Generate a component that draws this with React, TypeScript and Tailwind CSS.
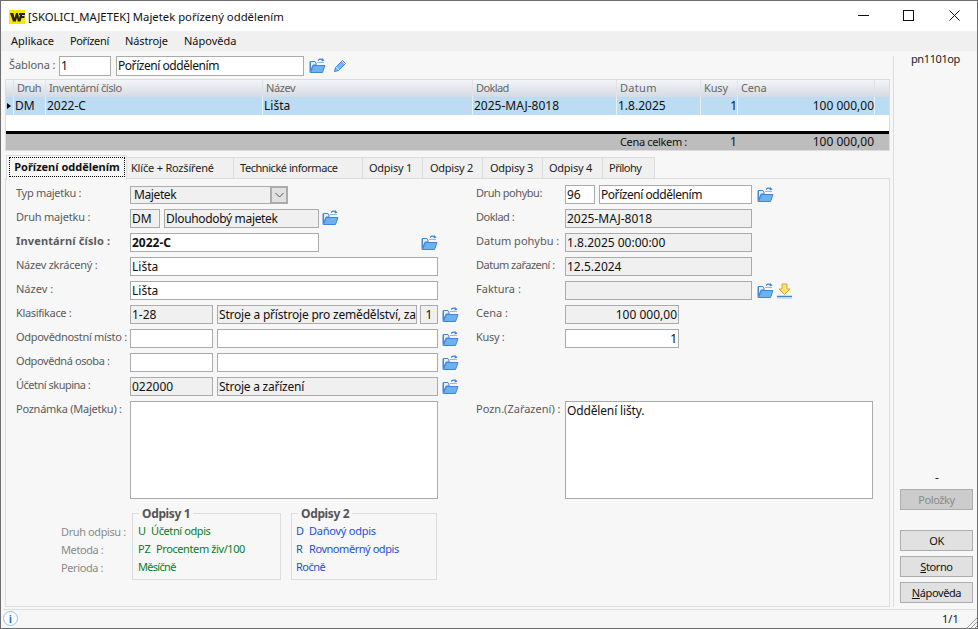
import React from "react";

const font = { fontFamily: "'Noto Sans', 'Liberation Sans', sans-serif" };

function Folder({ className }: { className: string }) {
  return (
    <svg className={className} width="17" height="17" viewBox="0 0 17 17" fill="none">
      <path d="M1.5 4.5H6L7 6V8H4L1.5 14Z" fill="#e3effb" stroke="#3f86d6" strokeWidth="1" />
      <path d="M4.5 8.5H16L13.5 15.5H1.5Z" fill="#6fb0ee" stroke="#3f86d6" strokeWidth="1" />
      <path d="M1 4.5V15.5" stroke="#3f86d6" strokeWidth="1" />
      <path d="M9 3.5C10.5 2 12.5 2 14 3" stroke="#3f86d6" strokeWidth="1.2" />
      <path d="M13 1L15.6 3.4L12.6 4.4Z" fill="#3f86d6" />
      <path d="M8 5.5H15" stroke="#8fbdeb" strokeWidth="1" />
    </svg>
  );
}

function Pencil({ className }: { className: string }) {
  return (
    <svg className={className} width="14" height="14" viewBox="0 0 14 14" fill="none">
      <path d="M1.5 12.5L2.5 8.5L9.5 1.5L12.5 4.5L5.5 11.5Z" fill="#7fb4ec" stroke="#3f86d6" strokeWidth="1" />
      <path d="M3 8L6 11M9 2L12 5" stroke="#e4f0fb" strokeWidth="1" />
    </svg>
  );
}

function Download({ className }: { className: string }) {
  return (
    <svg className={className} width="17" height="16" viewBox="0 0 17 16" fill="none">
      <path d="M6 1H11V6H14L8.5 11.5L3 6H6Z" fill="#fbe08a" stroke="#dfa520" strokeWidth="1" />
      <path d="M1 13.5H16" stroke="#3f86d6" strokeWidth="1.5" />
      <path d="M1 15H16" stroke="#a8ccf0" strokeWidth="1" />
    </svg>
  );
}

function Lbl({ className, children }: { className: string; children: React.ReactNode }) {
  return <div className={`absolute text-[11px] leading-[16px] text-[#5b5b5b] whitespace-nowrap ${className}`}>{children}</div>;
}

function Inp({ className, children, ro, right, bold }: { className: string; children?: React.ReactNode; ro?: boolean; right?: boolean; bold?: boolean }) {
  return (
    <div className={`absolute border border-[#ababab] text-[12px] leading-[16px] text-[#111] px-[1px] pt-[1px] whitespace-nowrap overflow-hidden ${ro ? "bg-[#f0f0f0]" : "bg-white"} ${right ? "text-right" : ""} ${bold ? "font-bold" : ""} ${className}`}>
      {children}
    </div>
  );
}

function Cell({ className, children }: { className: string; children: React.ReactNode }) {
  return <div className={`absolute whitespace-nowrap text-[12px] leading-[16px] ${className}`}>{children}</div>;
}

function HCell({ className, children }: { className: string; children: React.ReactNode }) {
  return <div className={`absolute whitespace-nowrap text-[11px] leading-[16px] top-0 ${className}`}>{children}</div>;
}

function Sep({ className }: { className: string }) {
  return <div className={`absolute top-0 bottom-0 w-[1px] bg-[#dfe3e8] ${className}`} />;
}

function Tab({ className, children }: { className: string; children: React.ReactNode }) {
  return (
    <div className={`absolute top-[156px] h-[22px] bg-[#f0f0f0] border border-[#dcdcdc] border-l-0 text-[11px] leading-[20px] text-[#222] whitespace-nowrap ${className}`}>
      {children}
    </div>
  );
}

function Btn({ className, children, disabled }: { className: string; children: React.ReactNode; disabled?: boolean }) {
  return (
    <div className={`absolute left-[899px] w-[73px] h-[21px] border border-[#adadad] text-center text-[11px] tracking-[-0.4px] leading-[19px] ${disabled ? "bg-[#cccccc] text-[#8a8a8a]" : "bg-[#e1e1e1] text-[#111]"} ${className}`}>
      {children}
    </div>
  );
}

export default function App() {
  return (
    <div className="relative w-[978px] h-[629px] overflow-hidden bg-[#f7f7f7] border border-[#6e6e6e]" style={font}>
      <div className="absolute left-0 top-0 w-[977px] h-[30px] bg-white" />
      <div className="absolute left-[8px] top-[9px] w-[16px] h-[14px] bg-[#ffe600] flex items-center justify-center">
        <svg width="15" height="10" viewBox="0 0 15 10">
          <path d="M0 1H3.4L4.4 6L6 1H8L9 6L10 3H9V1H15V3H12V4H14.5V6H11.5L10.5 9.5H7.8L7 5.5L5.8 9.5H3Z" fill="#222" />
        </svg>
      </div>
      <div className="absolute left-[27px] top-[7px] text-[11.3px] leading-[17px] text-[#111] whitespace-nowrap">[SKOLICI_MAJETEK] Majetek pořízený oddělením</div>
      <div className="absolute left-[857px] top-[14px] w-[11px] h-[1px] bg-[#111]" />
      <div className="absolute left-[902px] top-[9px] w-[11px] h-[11px] border border-[#111]" />
      <svg className="absolute left-[948px] top-[9px]" width="11" height="11" viewBox="0 0 11 11" stroke="#111"><path d="M0.5 0.5L10.5 10.5M10.5 0.5L0.5 10.5" /></svg>

      <div className="absolute left-0 top-[30px] w-[977px] h-[20px] bg-[#f0f0f0] flex text-[11px] leading-[20px] text-[#111]">
        <span className="ml-[10px]">Aplikace</span>
        <span className="ml-[16px] tracking-[-0.35px]">Pořízení</span>
        <span className="ml-[16px] tracking-[-0.1px]">Nástroje</span>
        <span className="ml-[16px]">Nápověda</span>
      </div>

      <Lbl className="left-[8px] top-[56px] tracking-[-0.1px]">Šablona :</Lbl>
      <Inp className="left-[58px] top-[55px] w-[52px] h-[20px]">1</Inp>
      <Inp className="left-[115px] top-[55px] w-[188px] h-[20px] tracking-[-0.45px]">Pořízení oddělením</Inp>
      <Folder className="absolute left-[308px] top-[56px]" />
      <Pencil className="absolute left-[332px] top-[58px]" />

      <div className="absolute left-[892px] top-[55px] w-[1px] h-[551px] bg-[#dcdcdc]" />
      <div className="absolute left-[910px] top-[50px] text-[11px] tracking-[-0.4px] leading-[16px] text-[#222]">pn1101op</div>

      {/* grid */}
      <div className="absolute left-[4px] top-[78px] w-[885px] h-[72px] bg-white border border-[#dcdcdc]">
        <div className="absolute left-0 top-0 w-full h-[17px] bg-gradient-to-b from-[#f3f5f8] to-[#d5dbe3] text-[#666]">
          <Sep className="left-[7px]" /><Sep className="left-[39px]" /><Sep className="left-[256px]" /><Sep className="left-[466px]" /><Sep className="left-[610px]" /><Sep className="left-[694px]" /><Sep className="left-[731px]" /><Sep className="left-[868px]" />
          <HCell className="left-[11px] tracking-[-0.5px]">Druh</HCell>
          <HCell className="left-[43px] tracking-[-0.4px]">Inventární číslo</HCell>
          <HCell className="left-[260px] tracking-[-0.4px]">Název</HCell>
          <HCell className="left-[470px] tracking-[-0.6px]">Doklad</HCell>
          <HCell className="left-[614px] tracking-[0.3px]">Datum</HCell>
          <HCell className="left-[698px] tracking-[-0.15px]">Kusy</HCell>
          <HCell className="left-[735px] tracking-[-0.15px]">Cena</HCell>
        </div>
        <div className="absolute left-0 top-[17px] w-full h-[18px] bg-[#bbdcf3] text-[#111]">
          <Sep className="left-[7px] bg-[#e4f0fa]" /><Sep className="left-[39px] bg-[#e4f0fa]" /><Sep className="left-[256px] bg-[#e4f0fa]" /><Sep className="left-[466px] bg-[#e4f0fa]" /><Sep className="left-[610px] bg-[#e4f0fa]" /><Sep className="left-[694px] bg-[#e4f0fa]" /><Sep className="left-[731px] bg-[#e4f0fa]" /><Sep className="left-[868px] bg-[#e4f0fa]" />
          <div className="absolute left-[1px] top-[6px] w-0 h-0 border-y-[3px] border-y-transparent border-l-[4px] border-l-black" />
          <Cell className="left-[9px] top-[1px]">DM</Cell>
          <Cell className="left-[41px] top-[1px]">2022-C</Cell>
          <Cell className="left-[258px] top-[1px]">Lišta</Cell>
          <Cell className="left-[468px] top-[1px]">2025-MAJ-8018</Cell>
          <Cell className="left-[612px] top-[1px]">1.8.2025</Cell>
          <Cell className="right-[152px] top-[1px]">1</Cell>
          <Cell className="right-[15px] top-[1px]">100 000,00</Cell>
        </div>
        <div className="absolute left-0 top-[51px] w-full h-[3px] bg-black" />
        <div className="absolute left-0 top-[54px] w-full h-[16px] bg-[#bdbdbd] text-[#111]">
          <HCell className="left-[614px] tracking-[-0.35px]">Cena celkem :</HCell>
          <Cell className="left-[724px] top-0">1</Cell>
          <Cell className="right-[15px] top-0">100 000,00</Cell>
        </div>
      </div>

      {/* tabs */}
      <div className="absolute left-[4px] top-[177px] w-[885px] h-[429px] border border-[#dcdcdc] bg-[#f7f7f7]" />
      <Tab className="left-[126px] w-[107px] pl-[4px] tracking-[-0.2px]">Klíče + Rozšířené</Tab>
      <Tab className="left-[233px] w-[129px] pl-[6px] tracking-[-0.45px]">Technické informace</Tab>
      <Tab className="left-[362px] w-[60px] pl-[6px] tracking-[-0.25px]">Odpisy 1</Tab>
      <Tab className="left-[422px] w-[60px] pl-[7px] tracking-[-0.25px]">Odpisy 2</Tab>
      <Tab className="left-[482px] w-[60px] pl-[7px] tracking-[-0.25px]">Odpisy 3</Tab>
      <Tab className="left-[542px] w-[60px] pl-[6px] tracking-[-0.25px]">Odpisy 4</Tab>
      <Tab className="left-[602px] w-[52px] pl-[6px] tracking-[-0.5px]">Přílohy</Tab>
      <div className="absolute left-[5px] top-[154px] w-[121px] h-[25px] bg-[#f7f7f7] border border-[#dcdcdc] border-b-0">
        <div className="absolute left-[2px] top-[1px] w-[116px] h-[20px] border border-dotted border-black text-center font-bold text-[11px] leading-[17px] text-[#111] whitespace-nowrap">Pořízení oddělením</div>
      </div>

      {/* left form */}
      <Lbl className="left-[15px] top-[184px] tracking-[-0.3px]">Typ majetku :</Lbl>
      <div className="absolute left-[129px] top-[185px] w-[158px] h-[18px] border border-[#ababab] bg-[#f0f0f0] text-[12px] leading-[16px] tracking-[-0.4px] text-[#111] pl-[3px]">
        Majetek
        <div className="absolute -right-[1px] -top-[1px] w-[18px] h-[18px] bg-[#e1e1e1] border-2 border-[#ababab] flex items-center justify-center">
          <svg width="9" height="6" viewBox="0 0 9 6" fill="none" stroke="#555"><path d="M0.5 1L4.5 5L8.5 1" /></svg>
        </div>
      </div>
      <Lbl className="left-[15px] top-[208px] tracking-[-0.2px]">Druh majetku :</Lbl>
      <Inp ro className="left-[129px] top-[208px] w-[30px] h-[19px]">DM</Inp>
      <Inp ro className="left-[163px] top-[208px] w-[155px] h-[19px] tracking-[-0.33px]">Dlouhodobý majetek</Inp>
      <Folder className="absolute left-[321px] top-[208px]" />
      <Lbl className="left-[15px] top-[232px] font-bold tracking-[0.15px]">Inventární číslo :</Lbl>
      <Inp bold className="left-[129px] top-[232px] w-[189px] h-[19px]">2022-C</Inp>
      <Folder className="absolute left-[420px] top-[233px]" />
      <Lbl className="left-[15px] top-[256px] tracking-[-0.25px]">Název zkrácený :</Lbl>
      <Inp className="left-[129px] top-[256px] w-[308px] h-[19px]">Lišta</Inp>
      <Lbl className="left-[15px] top-[280px]">Název :</Lbl>
      <Inp className="left-[129px] top-[280px] w-[308px] h-[19px]">Lišta</Inp>
      <Lbl className="left-[15px] top-[304px] tracking-[-0.35px]">Klasifikace :</Lbl>
      <Inp ro className="left-[129px] top-[304px] w-[83px] h-[19px]">1-28</Inp>
      <Inp ro className="left-[216px] top-[304px] w-[200px] h-[19px] tracking-[-0.2px]">Stroje a přístroje pro zemědělství, za</Inp>
      <Inp ro className="left-[419px] top-[304px] w-[18px] h-[19px] text-center">1</Inp>
      <Folder className="absolute left-[441px] top-[305px]" />
      <Lbl className="left-[15px] top-[328px] tracking-[-0.3px]">Odpovědnostní místo :</Lbl>
      <Inp className="left-[129px] top-[328px] w-[83px] h-[19px]" />
      <Inp className="left-[216px] top-[328px] w-[221px] h-[19px]" />
      <Folder className="absolute left-[441px] top-[329px]" />
      <Lbl className="left-[15px] top-[352px] tracking-[-0.4px]">Odpovědná osoba :</Lbl>
      <Inp className="left-[129px] top-[352px] w-[83px] h-[19px]" />
      <Inp className="left-[216px] top-[352px] w-[221px] h-[19px]" />
      <Folder className="absolute left-[441px] top-[353px]" />
      <Lbl className="left-[15px] top-[376px] tracking-[-0.5px]">Účetní skupina :</Lbl>
      <Inp ro className="left-[129px] top-[376px] w-[83px] h-[19px]">022000</Inp>
      <Inp ro className="left-[216px] top-[376px] w-[221px] h-[19px] tracking-[-0.24px]">Stroje a zařízení</Inp>
      <Folder className="absolute left-[441px] top-[377px]" />
      <Lbl className="left-[15px] top-[400px] tracking-[-0.25px]">Poznámka (Majetku) :</Lbl>
      <Inp className="left-[129px] top-[400px] w-[308px] h-[98px]" />

      {/* right form */}
      <Lbl className="left-[475px] top-[184px] tracking-[-0.45px]">Druh pohybu:</Lbl>
      <Inp className="left-[564px] top-[184px] w-[30px] h-[19px]">96</Inp>
      <Inp className="left-[598px] top-[184px] w-[153px] h-[19px] tracking-[-0.45px]">Pořízení oddělením</Inp>
      <Folder className="absolute left-[756px] top-[185px]" />
      <Lbl className="left-[475px] top-[208px] tracking-[-0.5px]">Doklad :</Lbl>
      <Inp ro className="left-[564px] top-[208px] w-[187px] h-[19px]">2025-MAJ-8018</Inp>
      <Lbl className="left-[475px] top-[232px]">Datum pohybu :</Lbl>
      <Inp ro className="left-[564px] top-[232px] w-[187px] h-[19px]">1.8.2025 00:00:00</Inp>
      <Lbl className="left-[475px] top-[256px] tracking-[-0.5px]">Datum zařazení :</Lbl>
      <Inp ro className="left-[564px] top-[256px] w-[187px] h-[19px]">12.5.2024</Inp>
      <Lbl className="left-[475px] top-[280px]">Faktura :</Lbl>
      <Inp ro className="left-[564px] top-[280px] w-[187px] h-[19px]" />
      <Folder className="absolute left-[756px] top-[281px]" />
      <Download className="absolute left-[775px] top-[282px]" />
      <Lbl className="left-[475px] top-[304px]">Cena :</Lbl>
      <Inp ro right className="left-[564px] top-[304px] w-[114px] h-[19px]">100 000,00</Inp>
      <Lbl className="left-[475px] top-[328px] tracking-[-0.3px]">Kusy :</Lbl>
      <Inp right className="left-[564px] top-[328px] w-[114px] h-[19px]">1</Inp>
      <Lbl className="left-[475px] top-[400px]">Pozn.(Zařazení) :</Lbl>
      <Inp className="left-[564px] top-[400px] w-[308px] h-[98px] tracking-[-0.15px]">Oddělení lišty.</Inp>

      {/* odpisy */}
      <Lbl className="left-[60px] top-[523px] text-[#8a8a8a] tracking-[-0.4px]">Druh odpisu :</Lbl>
      <Lbl className="left-[60px] top-[541px] text-[#8a8a8a] tracking-[-0.4px]">Metoda :</Lbl>
      <Lbl className="left-[60px] top-[559px] text-[#8a8a8a] tracking-[-0.4px]">Perioda :</Lbl>
      <div className="absolute left-[131px] top-[512px] w-[149px] h-[67px] border border-[#dcdcdc] text-[11px] leading-[16px] text-[#0a7d1e]">
        <div className="absolute left-[6px] -top-[8px] px-[3px] bg-[#f7f7f7] font-bold text-[12px] tracking-[-0.35px] text-[#555]">Odpisy 1</div>
        <div className="absolute left-[5px] top-[9px] whitespace-nowrap">U</div>
        <div className="absolute left-[18px] top-[9px] whitespace-nowrap tracking-[-0.4px]">Účetní odpis</div>
        <div className="absolute left-[5px] top-[27px] whitespace-nowrap">PZ</div>
        <div className="absolute left-[23px] top-[27px] whitespace-nowrap tracking-[-0.4px]">Procentem živ/100</div>
        <div className="absolute left-[5px] top-[45px] whitespace-nowrap tracking-[-0.7px]">Měsíčně</div>
      </div>
      <div className="absolute left-[290px] top-[512px] w-[146px] h-[67px] border border-[#dcdcdc] text-[11px] leading-[16px] text-[#1f4fd0]">
        <div className="absolute left-[6px] -top-[8px] px-[3px] bg-[#f7f7f7] font-bold text-[12px] tracking-[-0.35px] text-[#555]">Odpisy 2</div>
        <div className="absolute left-[4px] top-[9px] whitespace-nowrap">D</div>
        <div className="absolute left-[17px] top-[9px] whitespace-nowrap tracking-[-0.25px]">Daňový odpis</div>
        <div className="absolute left-[4px] top-[27px] whitespace-nowrap">R</div>
        <div className="absolute left-[17px] top-[27px] whitespace-nowrap tracking-[-0.45px]">Rovnoměrný odpis</div>
        <div className="absolute left-[4px] top-[45px] whitespace-nowrap tracking-[-0.5px]">Ročně</div>
      </div>

      {/* right panel */}
      <div className="absolute left-[934px] top-[469px] text-[12px] leading-[16px] text-[#222]">-</div>
      <Btn disabled className="top-[488px]">Položky</Btn>
      <Btn className="top-[529px]">OK</Btn>
      <Btn className="top-[555px]"><u>S</u>torno</Btn>
      <Btn className="top-[581px]"><u>N</u>ápověda</Btn>

      {/* status */}
      <div className="absolute left-[2px] top-[608px] w-[973px] h-[1px] bg-[#dcdcdc]" />
      <div className="absolute left-[2px] top-[610px] w-[15px] h-[15px] rounded-full border border-[#8fc4ee] bg-white text-center text-[11px] leading-[13px] font-bold text-[#2a78c8]">i</div>
      <div className="absolute left-[941px] top-[610px] text-[11px] leading-[16px] text-[#111]">1/1</div>
      <svg className="absolute left-[965px] top-[616px]" width="11" height="11" viewBox="0 0 11 11" stroke="#9a9a9a"><path d="M11 1L1 11M11 5L5 11M11 9L9 11" /></svg>
    </div>
  );
}
